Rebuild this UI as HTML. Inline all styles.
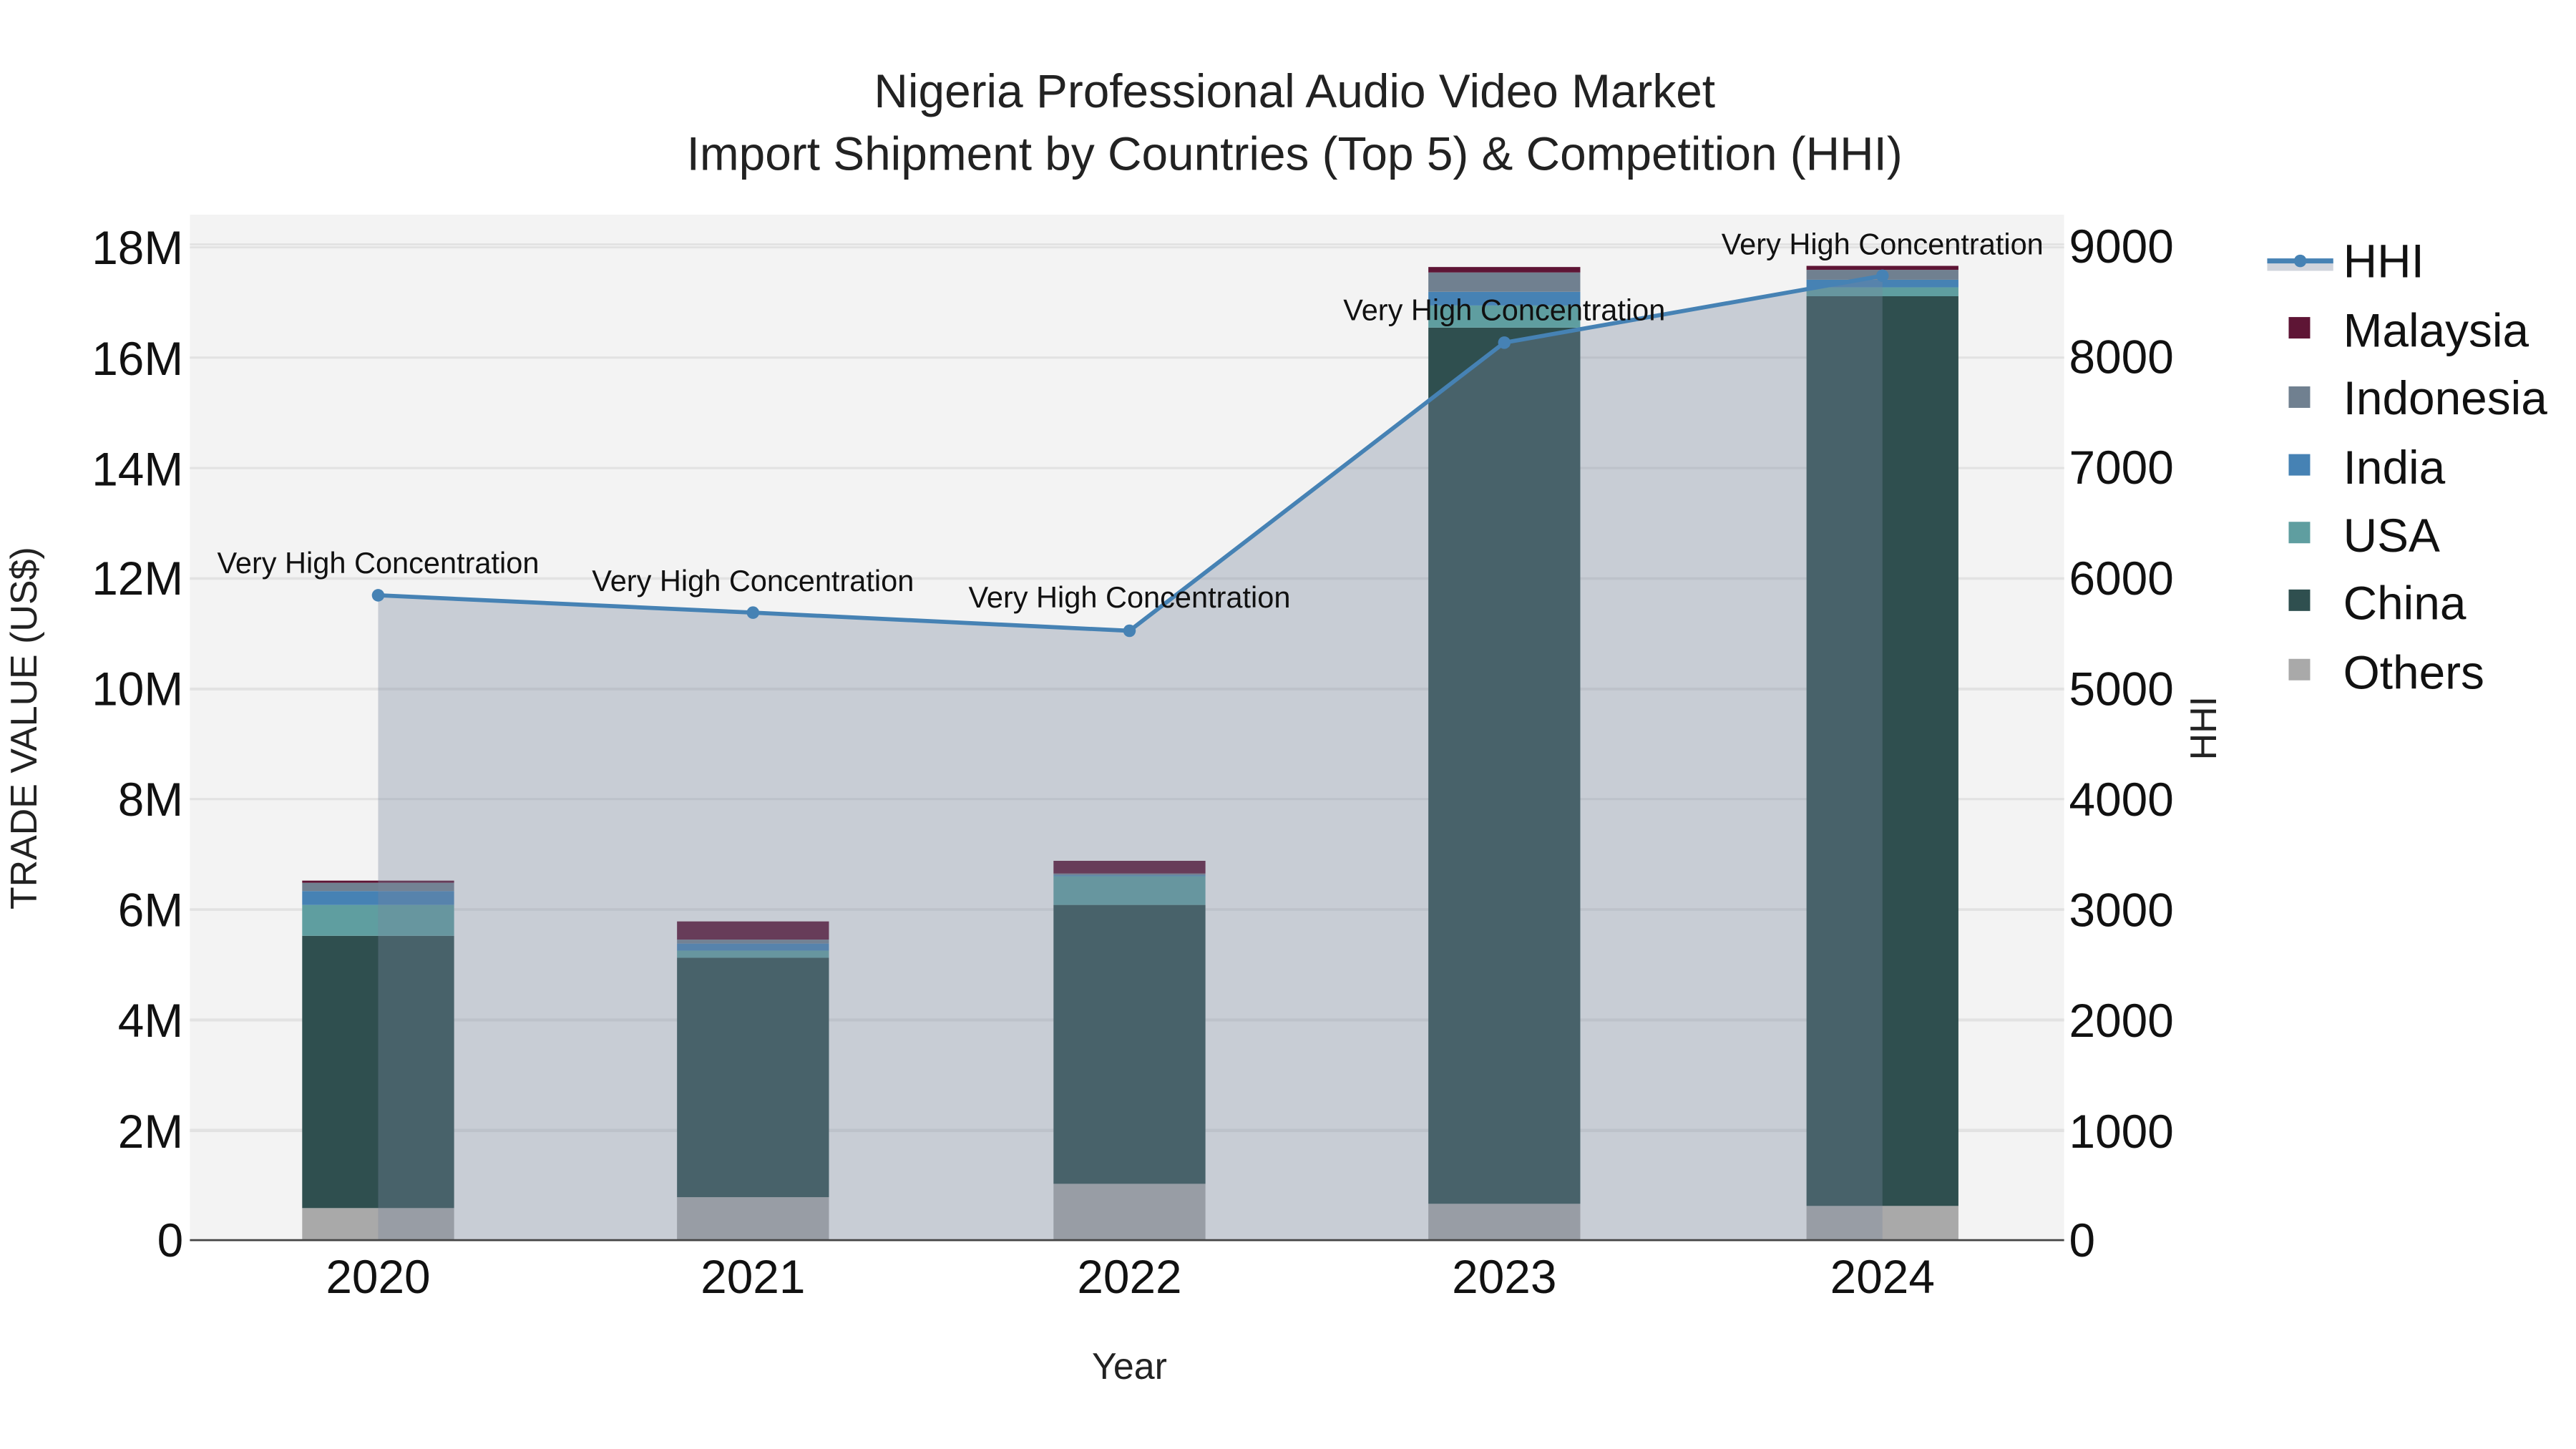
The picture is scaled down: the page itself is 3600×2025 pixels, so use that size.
<!DOCTYPE html>
<html><head><meta charset="utf-8"><style>html,body{margin:0;padding:0;background:#fff}svg{display:block}</style></head>
<body>
<svg width="3600" height="2025" viewBox="0 0 1560 877.5" xmlns="http://www.w3.org/2000/svg" font-family="Liberation Sans, sans-serif">
<rect x="0" y="0" width="1560" height="877.5" fill="#fff"/>
<rect x="115" y="130" width="1135" height="621" fill="#f3f3f3"/>
<g stroke="#e2e2e2" stroke-width="1.2">
<line x1="115" x2="1250" y1="684.2" y2="684.2"/><line x1="115" x2="1250" y1="617.4" y2="617.4"/>
<line x1="115" x2="1250" y1="550.6" y2="550.6"/><line x1="115" x2="1250" y1="483.8" y2="483.8"/>
<line x1="115" x2="1250" y1="417" y2="417"/><line x1="115" x2="1250" y1="350.2" y2="350.2"/>
<line x1="115" x2="1250" y1="283.4" y2="283.4"/><line x1="115" x2="1250" y1="216.6" y2="216.6"/>
<line x1="115" x2="1250" y1="149.8" y2="149.8"/>
<line x1="115" x2="1250" y1="685" y2="685"/><line x1="115" x2="1250" y1="618" y2="618"/>
<line x1="115" x2="1250" y1="551" y2="551"/><line x1="115" x2="1250" y1="484" y2="484"/>
<line x1="115" x2="1250" y1="417.5" y2="417.5"/><line x1="115" x2="1250" y1="350.5" y2="350.5"/>
<line x1="115" x2="1250" y1="283.5" y2="283.5"/><line x1="115" x2="1250" y1="216.5" y2="216.5"/>
<line x1="115" x2="1250" y1="148" y2="148"/>
</g>
<g>
<rect x="183" y="731.6" width="92" height="19.4" fill="#a9a9a9"/>
<rect x="183" y="566.7" width="92" height="164.9" fill="#2f4f4f"/>
<rect x="183" y="548" width="92" height="18.7" fill="#5f9ea0"/>
<rect x="183" y="539.6" width="92" height="8.4" fill="#4682b4"/>
<rect x="183" y="534.6" width="92" height="5" fill="#708090"/>
<rect x="183" y="533.3" width="92" height="1.3" fill="#5e1535"/>
<rect x="410" y="725" width="92" height="26" fill="#a9a9a9"/>
<rect x="410" y="580" width="92" height="145" fill="#2f4f4f"/>
<rect x="410" y="575.7" width="92" height="4.3" fill="#5f9ea0"/>
<rect x="410" y="571.4" width="92" height="4.3" fill="#4682b4"/>
<rect x="410" y="569" width="92" height="2.4" fill="#708090"/>
<rect x="410" y="558" width="92" height="11" fill="#5e1535"/>
<rect x="638" y="716.9" width="92" height="34.1" fill="#a9a9a9"/>
<rect x="638" y="548" width="92" height="168.9" fill="#2f4f4f"/>
<rect x="638" y="530.6" width="92" height="17.4" fill="#5f9ea0"/>
<rect x="638" y="530" width="92" height="0.6" fill="#4682b4"/>
<rect x="638" y="529" width="92" height="1" fill="#708090"/>
<rect x="638" y="521.3" width="92" height="7.7" fill="#5e1535"/>
<rect x="865" y="729" width="92" height="22" fill="#a9a9a9"/>
<rect x="865" y="198.4" width="92" height="530.6" fill="#2f4f4f"/>
<rect x="865" y="185" width="92" height="13.4" fill="#5f9ea0"/>
<rect x="865" y="176.7" width="92" height="8.3" fill="#4682b4"/>
<rect x="865" y="165" width="92" height="11.7" fill="#708090"/>
<rect x="865" y="161.7" width="92" height="3.3" fill="#5e1535"/>
<rect x="1094" y="730.3" width="92" height="20.7" fill="#a9a9a9"/>
<rect x="1094" y="179.4" width="92" height="550.9" fill="#2f4f4f"/>
<rect x="1094" y="174" width="92" height="5.4" fill="#5f9ea0"/>
<rect x="1094" y="169.4" width="92" height="4.6" fill="#4682b4"/>
<rect x="1094" y="163.4" width="92" height="6" fill="#708090"/>
<rect x="1094" y="161" width="92" height="2.4" fill="#5e1535"/>
</g>
<polygon points="229,751 229,360.5 456,371 684,382 911,207.5 1140,167 1140,751" fill="rgb(120,134,157)" fill-opacity="0.35"/>
<polyline points="229,360.5 456,371 684,382 911,207.5 1140,167" fill="none" stroke="#4682b4" stroke-width="2.5"/>
<g fill="#4682b4"><circle cx="229" cy="360.5" r="3.8"/><circle cx="456" cy="371" r="3.8"/><circle cx="684" cy="382" r="3.8"/><circle cx="911" cy="207.5" r="3.8"/><circle cx="1140" cy="167" r="3.8"/></g>
<line x1="115" x2="1250" y1="751" y2="751" stroke="#444" stroke-width="1.2"/>
<g font-size="18" fill="#111" text-anchor="middle">
<text x="229" y="347">Very High Concentration</text>
<text x="456" y="358">Very High Concentration</text>
<text x="684" y="368">Very High Concentration</text>
<text x="911" y="194">Very High Concentration</text>
<text x="1140" y="154">Very High Concentration</text>
</g>
<g font-size="28.5" fill="#222" text-anchor="middle">
<text x="784" y="65">Nigeria Professional Audio Video Market</text>
<text x="784" y="103">Import Shipment by Countries (Top 5) &amp; Competition (HHI)</text>
</g>
<g font-size="28.5" fill="#111" text-anchor="end">
<text x="111" y="761">0</text><text x="111" y="695">2M</text><text x="111" y="628">4M</text>
<text x="111" y="561">6M</text><text x="111" y="494">8M</text><text x="111" y="427">10M</text>
<text x="111" y="360">12M</text><text x="111" y="294">14M</text><text x="111" y="227">16M</text>
<text x="111" y="160">18M</text>
</g>
<g font-size="28.5" fill="#111" text-anchor="start">
<text x="1253" y="761">0</text><text x="1253" y="695">1000</text><text x="1253" y="628">2000</text>
<text x="1253" y="561">3000</text><text x="1253" y="494">4000</text><text x="1253" y="427">5000</text>
<text x="1253" y="360">6000</text><text x="1253" y="293">7000</text><text x="1253" y="226">8000</text>
<text x="1253" y="159">9000</text>
</g>
<g font-size="28.5" fill="#111" text-anchor="middle">
<text x="229" y="783">2020</text><text x="456" y="783">2021</text><text x="684" y="783">2022</text>
<text x="911" y="783">2023</text><text x="1140" y="783">2024</text>
</g>
<text x="684" y="835" font-size="22.5" fill="#222" text-anchor="middle">Year</text>
<text transform="translate(22,441) rotate(-90)" font-size="22.5" fill="#222" text-anchor="middle">TRADE VALUE (US$)</text>
<text transform="translate(1342,441) rotate(-90)" font-size="22.5" fill="#222" text-anchor="middle">HHI</text>
<rect x="1373" y="158" width="40" height="6" fill="#d0d4dc"/>
<line x1="1373" x2="1413" y1="158" y2="158" stroke="#4682b4" stroke-width="3"/>
<circle cx="1393" cy="158" r="3.8" fill="#4682b4"/>
<rect x="1386" y="192" width="13" height="13" fill="#5e1535"/>
<rect x="1386" y="234" width="13" height="13" fill="#708090"/>
<rect x="1386" y="275" width="13" height="13" fill="#4682b4"/>
<rect x="1386" y="316" width="13" height="13" fill="#5f9ea0"/>
<rect x="1386" y="357" width="13" height="13" fill="#2f4f4f"/>
<rect x="1386" y="399" width="13" height="13" fill="#a9a9a9"/>
<g font-size="28.5" fill="#111">
<text x="1419" y="168">HHI</text><text x="1419" y="210">Malaysia</text><text x="1419" y="251">Indonesia</text>
<text x="1419" y="293">India</text><text x="1419" y="334">USA</text><text x="1419" y="375">China</text>
<text x="1419" y="417">Others</text>
</g>
</svg>
</body></html>
